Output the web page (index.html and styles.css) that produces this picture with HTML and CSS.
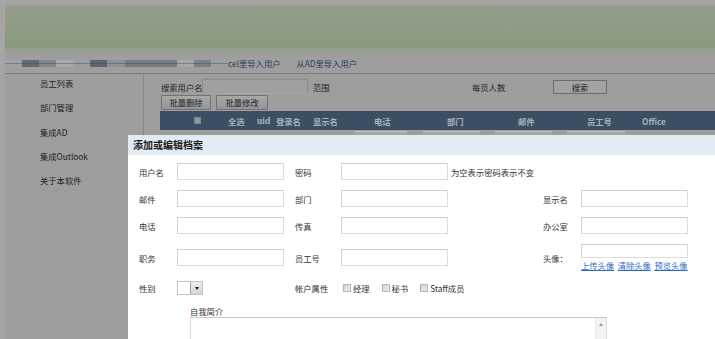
FILE: index.html
```html
<!DOCTYPE html>
<html lang="zh">
<head>
<meta charset="utf-8">
<title>员工管理</title>
<link rel="stylesheet" href="styles.css">
</head>
<body>
<div class="page">
  <div class="banner"></div>
  <div class="nav">
    <div class="stripes"></div>
    <a class="nav-link">cel里导入用户</a>
    <a class="nav-link">从AD里导入用户</a>
  </div>
  <div class="main">
    <ul class="sidebar">
      <li class="side-item">员工列表</li>
      <li class="side-item">部门管理</li>
      <li class="side-item">集成AD</li>
      <li class="side-item">集成Outlook</li>
      <li class="side-item">关于本软件</li>
    </ul>
    <div class="content">
      <div class="search-row">
        <span class="s-label">搜索用户名</span>
        <span class="s-input"></span>
        <span class="s-range">范围</span>
        <span class="s-per">每页人数</span>
        <span class="s-btn">搜索</span>
      </div>
      <div class="batch-row">
        <span class="b-btn b1">批量删除</span>
        <span class="b-btn b2">批量修改</span>
      </div>
      <div class="thead">
        <span class="th th-cb"><span class="cb-dark"></span></span>
        <span class="th w29">全选</span>
        <span class="th w19 serif">uid</span>
        <span class="th w37">登录名</span>
        <span class="th w61">显示名</span>
        <span class="th w73">电话</span>
        <span class="th w71">部门</span>
        <span class="th w69">邮件</span>
        <span class="th w55">员工号</span>
        <span class="th">Office</span>
      </div>
      <div class="filter-row">
        <span class="fbox f1"></span>
        <span class="fbox f2"></span>
        <span class="fbox f3"></span>
        <span class="fbox f4"></span>
      </div>
    </div>
  </div>
</div>

<div class="dialog">
  <div class="dlg-title">添加或编辑档案</div>
  <div class="dlg-body">
    <div class="form">
      <span class="lbl">用户名</span><span class="fi"></span>
      <span class="lbl">密码</span><span class="cell"><span class="fi"></span><span class="note">为空表示密码表示不变</span></span>
      <span></span><span></span>

      <span class="lbl">邮件</span><span class="fi"></span>
      <span class="lbl">部门</span><span class="fi"></span>
      <span class="lbl">显示名</span><span class="fi"></span>

      <span class="lbl">电话</span><span class="fi"></span>
      <span class="lbl">传真</span><span class="fi"></span>
      <span class="lbl">办公室</span><span class="fi"></span>

      <span class="lbl">职务</span><span class="fi"></span>
      <span class="lbl">员工号</span><span class="fi"></span>
      <span class="lbl">头像：</span>
      <span class="avatar">
        <span class="fi fi-short"></span>
        <span class="links"><a class="lk">上传头像</a><a class="lk">清除头像</a><a class="lk">预览头像</a></span>
      </span>

      <span class="lbl">性别</span>
      <span class="select"><span class="sel-val"></span><span class="sel-btn"><span class="tri"></span></span></span>
      <span class="lbl">帐户属性</span>
      <span class="checks">
        <span class="ck"><span class="box"></span>经理</span>
        <span class="ck"><span class="box"></span>秘书</span>
        <span class="ck"><span class="box"></span>Staff成员</span>
      </span>
    </div>
    <div class="intro">
      <div class="intro-lbl">自我简介</div>
      <div class="ta">
        <div class="ta-text"></div>
        <div class="sb"><span class="sb-up"></span></div>
      </div>
    </div>
  </div>
</div>
</body>
</html>
```

FILE: styles.css
```css
* { box-sizing: border-box; margin: 0; padding: 0; }
html, body { width: 715px; height: 339px; overflow: hidden; }
body {
  background: #a5a5a5;
  font-family: "Noto Sans CJK SC", "Liberation Sans", sans-serif;
  font-size: 8.3px;
  color: #1f1f1f;
  position: relative;
  white-space: nowrap;
}
ul { list-style: none; }
a { cursor: pointer; }

.page { margin-left: 5px; height: 339px; overflow: hidden; background: #9e9e9e; }

.banner {
  height: 53px;
  background: linear-gradient(#a4a6a2 0, #a4a6a2 4px, #969f8f 6px, #919c89 20px, #8c9a83 36px, #889a7e 46px, #96a08f 50px, #9d9f9a 53px);
}

.nav {
  height: 21px;
  border-bottom: 1px solid #7e7e7e;
  display: flex;
  align-items: center;
  background: #9e9e9e;
}
.stripes {
  width: 223px;
  height: 7px;
  background:
    linear-gradient(#0000 0, #0000 3px, rgba(70,76,84,.45) 3px, rgba(70,76,84,.45) 4px, #0000 4px),
    linear-gradient(to right,
      #a0a2a4 0, #a0a2a4 17px,
      #646a71 17px, #646a71 34px,
      #82878c 34px, #82878c 51px,
      #a7abae 51px, #a7abae 68px,
      #9a9fa4 68px, #9a9fa4 85px,
      #60666d 85px, #60666d 102px,
      #8d9298 102px, #8d9298 120px,
      #767c82 120px, #767c82 172px,
      #a5a9ac 172px, #a5a9ac 189px,
      #7b8186 189px, #7b8186 206px,
      #9aa0a4 206px, #9aa0a4 223px);
}
.nav-link { color: #2c3d58; line-height: 12px; }
.nav-link + .nav-link { margin-left: 16px; }

.main { display: flex; height: 265px; }
.sidebar {
  width: 139px;
  border-right: 1px solid #868686;
  padding-left: 35px;
}
.side-item { height: 18px; line-height: 18px; margin-bottom: 6.25px; color: #202020; }

.content { flex: 1; padding-top: 5px; }
.search-row { display: flex; align-items: center; height: 15px; padding-left: 17px; }
.s-label { width: 41px; flex: none; }
.s-input { width: 106px; height: 15px; flex: none; border: 1px solid #8a8a8a; border-bottom-color: #a8a8a8; background: #a0a0a0; }
.s-range { margin-left: 5px; width: 159px; flex: none; }
.s-per { width: 81px; flex: none; }
.s-btn {
  width: 54px; height: 14px; line-height: 12px; text-align: center; flex: none;
  border: 1px solid #6c6c6c; background: #a3a3a3;
}
.batch-row { display: flex; padding-left: 17px; margin-top: 1px; height: 15px; }
.b-btn {
  height: 15px; line-height: 13px; text-align: center; flex: none;
  border: 1px solid #727272; border-radius: 1px;
  background: linear-gradient(#a9a9a9, #949494);
  color: #262626;
}
.b1 { width: 50px; }
.b2 { width: 52px; margin-left: 5px; }

.thead {
  margin-left: 16px; margin-top: 1px; height: 19px;
  background: #3b4e63;
  display: flex; align-items: center;
  padding-left: 34px;
  color: #a8b2bd; font-weight: bold;
}
.th { flex: none; line-height: 12px; }
.th-cb { width: 34px; display: flex; align-items: center; }
.cb-dark { width: 7px; height: 7px; background: #8f969e; border: 1px solid #7d858e; }
.serif { font-family: "Liberation Serif", serif; font-size: 9.5px; }
.w29 { width: 29px; } .w19 { width: 19px; } .w37 { width: 37px; } .w61 { width: 61px; }
.w73 { width: 73px; } .w71 { width: 71px; } .w69 { width: 69px; } .w55 { width: 55px; }

.filter-row { margin-left: 16px; height: 5px; display: flex; padding-top: 1px; }
.fbox { height: 4px; border-top: 1px solid #c4c4c4; background: #a6a6a6; flex: none; }
.f1 { margin-left: 195px; width: 52px; }
.f2 { margin-left: 16px; width: 57px; }
.f3 { margin-left: 15px; width: 57px; }
.f4 { margin-left: 15px; width: 58px; }

.dialog {
  position: absolute; left: 128px; top: 135px;
  width: 600px; height: 204px;
  overflow: hidden;
  background: #fff;
  color: #333;
}
.dlg-title {
  height: 20px; line-height: 20px; padding-left: 5px;
  background: #e3ebf5; color: #1a1a1a;
  font-weight: bold; font-size: 10px;
}
.dlg-body { padding: 8px 0 0 11px; }
.form {
  display: grid;
  grid-template-columns: 38px 118px 46px 202px 38px 107px;
  row-gap: 10px;
  align-items: center;
}
.lbl { line-height: 12px; }
.fi {
  display: block; width: 107px; height: 17px; flex: none;
  border: 1px solid #dcdcdc; border-top-color: #cfcfcf; border-left-color: #d3d3d3;
  background: #fff;
}
.fi-short { height: 14px; }
.cell { display: flex; align-items: center; }
.note { margin-left: 3px; line-height: 12px; }
.avatar { display: flex; flex-direction: column; }
.links { display: flex; height: 12px; margin-top: 1px; line-height: 12px; }
.lk { color: #2f6bc4; text-decoration: underline; margin-right: 3.5px; flex: none; }

.select { display: flex; width: 26px; height: 14px; border: 1px solid #c4c4c4; }
.sel-val { width: 12px; background: #fff; }
.sel-btn {
  width: 12px; background: linear-gradient(#ececec, #d5d5d5);
  border-left: 1px solid #a6a6a6;
  display: flex; align-items: center; justify-content: center;
}
.tri { width: 0; height: 0; border-left: 2.5px solid transparent; border-right: 2.5px solid transparent; border-top: 3px solid #222; }

.checks { display: flex; align-items: center; padding-left: 2px; }
.ck { display: flex; align-items: center; line-height: 12px; margin-right: 12px; flex: none; }
.box {
  width: 8px; height: 8px; margin-right: 2px; flex: none;
  border: 1px solid #b8b8b8;
  background: linear-gradient(135deg, #d4d4d4, #ececec);
}

.intro { margin-left: 51px; margin-top: 10px; }
.intro-lbl { line-height: 12px; height: 12px; }
.ta {
  width: 417px; height: 40px;
  border: 1px solid #dedede; border-top-color: #c9c9c9;
  display: flex; justify-content: flex-end;
}
.ta-text { flex: 1; }
.sb { width: 11px; background: #f3f3f3; border-left: 1px solid #ebebeb; display: flex; justify-content: center; padding-top: 5px; }
.sb-up { width: 0; height: 0; border-left: 2.5px solid transparent; border-right: 2.5px solid transparent; border-bottom: 3px solid #9a9a9a; }
```
